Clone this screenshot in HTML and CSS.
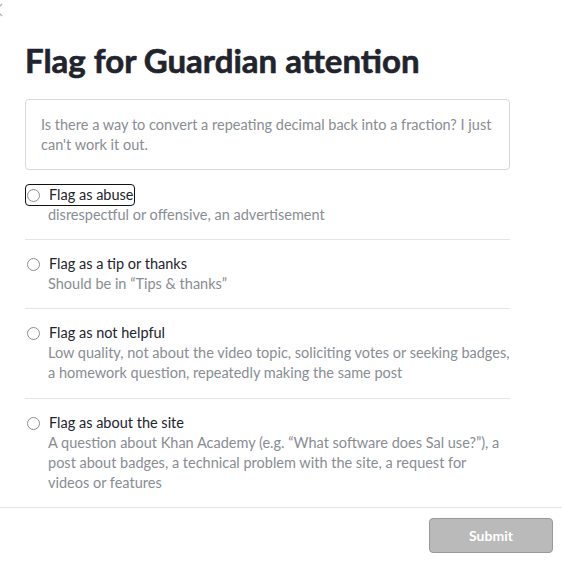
FILE: index.html
```html
<!DOCTYPE html>
<html>
<head>
    <title>Flag for Guardian attention</title>
    <link rel="stylesheet" href="styles.css">
</head>
<body>
    <svg class="close-mark" width="14" height="14" viewBox="0 0 14 14">
        <path d="M1 1 L13 13 M13 1 L1 13" stroke="#b5b5b5" stroke-width="1.5" fill="none"/>
    </svg>
    <div class="modal-body">
        <h1 class="title">Flag for Guardian attention</h1>
        <div class="quote">Is there a way to convert a repeating decimal back into a fraction? I just can't work it out.</div>
        <form class="flag-form">
            <div class="flag-option">
                <label class="flag-label focused"><input type="radio" name="flag" value="abuse"><span>Flag as abuse</span></label>
                <div class="flag-desc">disrespectful or offensive, an advertisement</div>
            </div>
            <div class="flag-option">
                <label class="flag-label"><input type="radio" name="flag" value="tip"><span>Flag as a tip or thanks</span></label>
                <div class="flag-desc">Should be in “Tips &amp; thanks”</div>
            </div>
            <div class="flag-option">
                <label class="flag-label"><input type="radio" name="flag" value="unhelpful"><span>Flag as not helpful</span></label>
                <div class="flag-desc">Low quality, not about the video topic, soliciting votes or seeking badges, a homework question, repeatedly making the same post</div>
            </div>
            <div class="flag-option">
                <label class="flag-label"><input type="radio" name="flag" value="site"><span>Flag as about the site</span></label>
                <div class="flag-desc">A question about Khan Academy (e.g. “What software does Sal use?”), a post about badges, a technical problem with the site, a request for videos or features</div>
            </div>
        </form>
    </div>
    <div class="modal-footer">
        <button class="submit-btn" disabled>Submit</button>
    </div>
</body>
</html>
```

FILE: styles.css
```css
body {
    font-family: Lato, "Open Sans", sans-serif;
    margin: 0;
    padding: 0;
    background: #fff;
    color: #21242c;
}

.close-mark {
    position: absolute;
    left: -11px;
    top: 3px;
}

.modal-body {
    padding: 42px 52px 0 25px;
}

.title {
    font-size: 33px;
    font-weight: 700;
    line-height: 36px;
    margin: 0 0 21px 0;
    -webkit-text-stroke: 0.6px #21242c;
}

.quote {
    border: 1px solid #d6d8da;
    border-radius: 4px;
    padding: 15px 15px 14px 15px;
    font-size: 14.5px;
    line-height: 20px;
    color: #888d93;
}

.flag-form {
    margin-top: 1px;
}

.flag-option {
    padding: 14px 0 14px 0;
    border-bottom: 1px solid #e3e5e6;
}

.flag-option:nth-child(3) {
    padding-bottom: 15px;
}

.flag-option:last-child {
    border-bottom: none;
}

.flag-label {
    display: inline-flex;
    align-items: center;
    font-size: 14.5px;
    line-height: 20px;
    cursor: pointer;
    border-radius: 3px;
    margin-left: 1px;
}

.flag-label.focused {
    outline: 1.5px solid #111;
    outline-offset: 0;
}

.flag-label input {
    appearance: none;
    width: 13px;
    height: 13px;
    margin: 0 9px 0 1px;
    border: 1px solid #8b8e93;
    border-radius: 50%;
    background: #fff;
}

.flag-desc {
    margin-left: 23px;
    font-size: 14.5px;
    line-height: 20px;
    color: #888d93;
}

.modal-footer {
    border-top: 1px solid #e3e5e6;
    display: flex;
    justify-content: flex-end;
    padding: 10px 9px 0 0;
}

.submit-btn {
    width: 124px;
    height: 35px;
    font-family: Lato, sans-serif;
    font-size: 14px;
    font-weight: 700;
    color: #fff;
    background-color: #bababa;
    border: 1px solid #999;
    border-radius: 4px;
}
```
